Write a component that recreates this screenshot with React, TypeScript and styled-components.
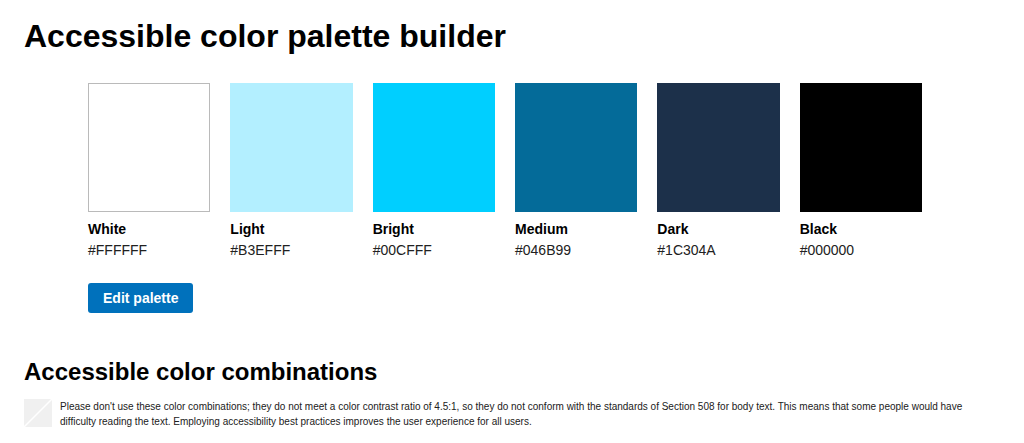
import React from "react";
import styled, { createGlobalStyle } from "styled-components";

const fontStack = `"Liberation Sans", Arial, Helvetica, sans-serif`;

const GlobalStyle = createGlobalStyle`
  body {
    margin: 0;
    background: #ffffff;
    color: #000000;
    font-family: ${fontStack};
  }
`;

const Page = styled.main`
  padding: 16px 24px 12px;
`;

const Title = styled.h1`
  margin: 0;
  font-size: 32px;
  line-height: 40px;
`;

const Palette = styled.section`
  margin: 27px 78px 0 64px;
`;

const SwatchList = styled.ul`
  display: grid;
  grid-template-columns: repeat(6, 1fr);
  gap: 20px;
  margin: 0 0 22px;
  padding: 0;
  list-style: none;
`;

const Swatch = styled.div<{ $color: string; $outlined?: boolean }>`
  box-sizing: border-box;
  height: 129px;
  margin-bottom: 7px;
  background: ${(p) => p.$color};
  border: ${(p) => (p.$outlined ? "1px solid #bababa" : "none")};
`;

const Name = styled.div`
  font-size: 14px;
  font-weight: 700;
  line-height: 21px;
`;

const Hex = styled.div`
  color: #212121;
  font-size: 14px;
  line-height: 21px;
`;

const EditButton = styled.button`
  display: block;
  padding: 5px 15px;
  border: 0;
  border-radius: 3px;
  background: #0071bc;
  color: #ffffff;
  font: 700 14px/20px ${fontStack};
  cursor: pointer;
`;

const Subtitle = styled.h2`
  margin: 43px 0 12px;
  font-size: 24px;
  line-height: 31px;
`;

const Notice = styled.div`
  display: flex;
  align-items: flex-start;
  gap: 8px;
`;

const NoticeIcon = styled.svg`
  flex: none;
  width: 28px;
  height: 28px;
`;

const NoticeText = styled.p`
  margin: 0;
  color: #212121;
  font-size: 10px;
  line-height: 15px;
`;

const colors = [
  { name: "White", hex: "#FFFFFF", outlined: true },
  { name: "Light", hex: "#B3EFFF" },
  { name: "Bright", hex: "#00CFFF" },
  { name: "Medium", hex: "#046B99" },
  { name: "Dark", hex: "#1C304A" },
  { name: "Black", hex: "#000000" },
];

export default function App() {
  return (
    <Page>
      <GlobalStyle />
      <Title>Accessible color palette builder</Title>
      <Palette>
        <SwatchList>
          {colors.map((c) => (
            <li key={c.name}>
              <Swatch $color={c.hex} $outlined={c.outlined} />
              <Name>{c.name}</Name>
              <Hex>{c.hex}</Hex>
            </li>
          ))}
        </SwatchList>
        <EditButton type="button">Edit palette</EditButton>
      </Palette>
      <Subtitle>Accessible color combinations</Subtitle>
      <Notice>
        <NoticeIcon viewBox="0 0 28 28" aria-hidden="true">
          <rect width="28" height="28" fill="#f0f0f0" />
          <path d="M0 28L28 0" stroke="#ffffff" strokeWidth="1.4" />
        </NoticeIcon>
        <NoticeText>
          Please don't use these color combinations; they do not meet a color
          contrast ratio of 4.5:1, so they do not conform with the standards of
          Section 508 for body text. This means that some people would have
          difficulty reading the text. Employing accessibility best practices
          improves the user experience for all users.
        </NoticeText>
      </Notice>
    </Page>
  );
}
